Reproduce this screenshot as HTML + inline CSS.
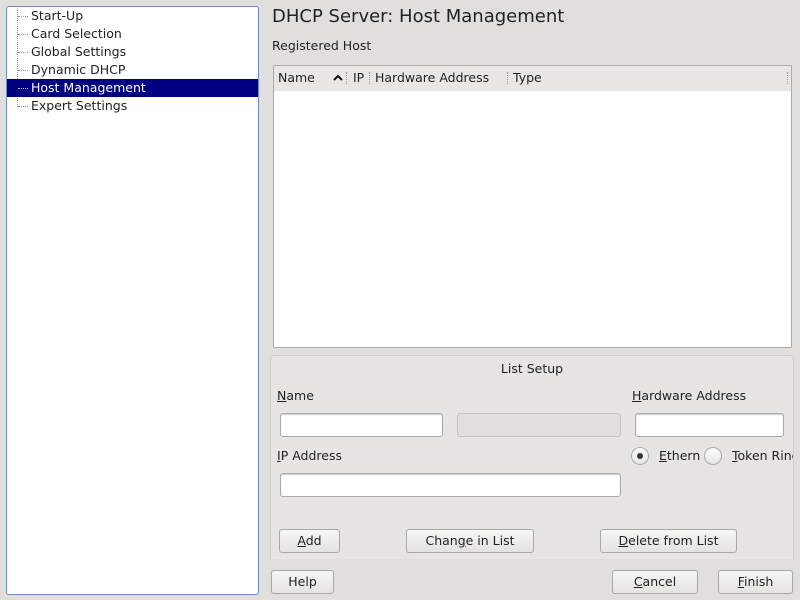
<!DOCTYPE html>
<html><head><style>
*{box-sizing:border-box;margin:0;padding:0}
body{width:800px;height:600px;background:#e0dfde;font-family:"DejaVu Sans","Liberation Sans",sans-serif;font-size:12.5px;color:#222;position:relative;overflow:hidden}
.a{position:absolute;white-space:nowrap}
.tree{left:6px;top:6px;width:253px;height:589px;background:#fff;border:1px solid #6a8ec4;border-radius:3px}
.it{position:absolute;left:24px;height:18px;line-height:18px}
.vl{position:absolute;left:10px;top:2px;height:98px;border-left:1px dotted #999}
.hl{position:absolute;left:11px;width:10px;border-top:1px dotted #999}
.inp{position:absolute;height:24px;background:#fff;border:1px solid #a9a9a9;border-radius:3px;box-shadow:inset 0 1px 1px #ccc}
.btn{position:absolute;height:24px;line-height:22px;text-align:center;background:linear-gradient(#f6f6f5,#e4e3e2);border:1px solid #a8a8a8;border-radius:3px}
u{text-decoration:underline}
.rad{position:absolute;width:18px;height:18px;border-radius:50%;border:1px solid #aaa;background:linear-gradient(#fdfdfd,#e6e6e6)}
</style></head><body>
<div class="a tree">
<div class="vl"></div>
<div class="hl" style="top:9px"></div><div class="it" style="top:0">Start-Up</div>
<div class="hl" style="top:27px"></div><div class="it" style="top:18px">Card Selection</div>
<div class="hl" style="top:45px"></div><div class="it" style="top:36px">Global Settings</div>
<div class="hl" style="top:63px"></div><div class="it" style="top:54px">Dynamic DHCP</div>
<div style="position:absolute;left:0;top:72px;width:251px;height:18px;background:#000080"></div>
<div class="hl" style="top:81px;border-color:#ccc"></div><div class="it" style="top:72px;color:#fff">Host Management</div>
<div class="hl" style="top:99px"></div><div class="it" style="top:90px">Expert Settings</div>
</div>
<div class="a" style="left:272px;top:6px;font-size:18px">DHCP Server: Host Management</div>
<div class="a" style="left:272px;top:38px">Registered Host</div>
<div class="a" style="left:273px;top:65px;width:519px;height:283px;background:#fff;border:1px solid #aaa;border-radius:2px"></div>
<div class="a" style="left:274px;top:66px;width:517px;height:25px;background:#e8e7e6"></div>
<div class="a" style="left:278px;top:70px">Name</div>
<svg class="a" style="left:333px;top:74px" width="10" height="7"><path d="M1 6 L5 2 L9 6" stroke="#111" stroke-width="2" fill="none"/></svg>
<div class="a" style="left:346px;top:72px;height:12px;border-left:1px dotted #999"></div>
<div class="a" style="left:353px;top:70px">IP</div>
<div class="a" style="left:369px;top:72px;height:12px;border-left:1px dotted #999"></div>
<div class="a" style="left:375px;top:70px">Hardware Address</div>
<div class="a" style="left:507px;top:72px;height:12px;border-left:1px dotted #999"></div>
<div class="a" style="left:513px;top:70px">Type</div>
<div class="a" style="left:787px;top:72px;height:12px;border-left:1px dotted #999"></div>
<div class="a" style="left:270px;top:355px;width:524px;height:204px;background:#e6e5e4;border:1px solid #ccc;border-bottom:none;border-radius:4px 4px 0 0"></div>
<div class="a" style="left:270px;top:361px;width:524px;text-align:center">List Setup</div>
<div class="a" style="left:277px;top:388px"><u>N</u>ame</div>
<div class="a" style="left:632px;top:388px"><u>H</u>ardware Address</div>
<div class="inp" style="left:280px;top:413px;width:163px"></div>
<div class="inp" style="left:457px;top:413px;width:164px;background:#e0dfde;box-shadow:none;border-color:#c4c4c4"></div>
<div class="inp" style="left:635px;top:413px;width:149px"></div>
<div class="a" style="left:277px;top:448px"><u>I</u>P Address</div>
<div class="inp" style="left:280px;top:473px;width:341px"></div>
<div class="rad" style="left:631px;top:447px"></div>
<div class="a" style="left:637px;top:453px;width:6px;height:6px;border-radius:50%;background:#333"></div>
<div class="a" style="left:659px;top:448px"><u>E</u>thern</div>
<div class="rad" style="left:704px;top:447px"></div>
<div class="a" style="left:732px;top:448px;width:61px;overflow:hidden"><u>T</u>oken Ring</div>
<div class="btn" style="left:279px;top:529px;width:61px"><u>A</u>dd</div>
<div class="btn" style="left:406px;top:529px;width:128px">Chan<u>g</u>e in List</div>
<div class="btn" style="left:600px;top:529px;width:137px"><u>D</u>elete from List</div>
<div class="btn" style="left:271px;top:570px;width:63px">Help</div>
<div class="btn" style="left:612px;top:570px;width:86px"><u>C</u>ancel</div>
<div class="btn" style="left:718px;top:570px;width:75px"><u>F</u>inish</div>
</body></html>
